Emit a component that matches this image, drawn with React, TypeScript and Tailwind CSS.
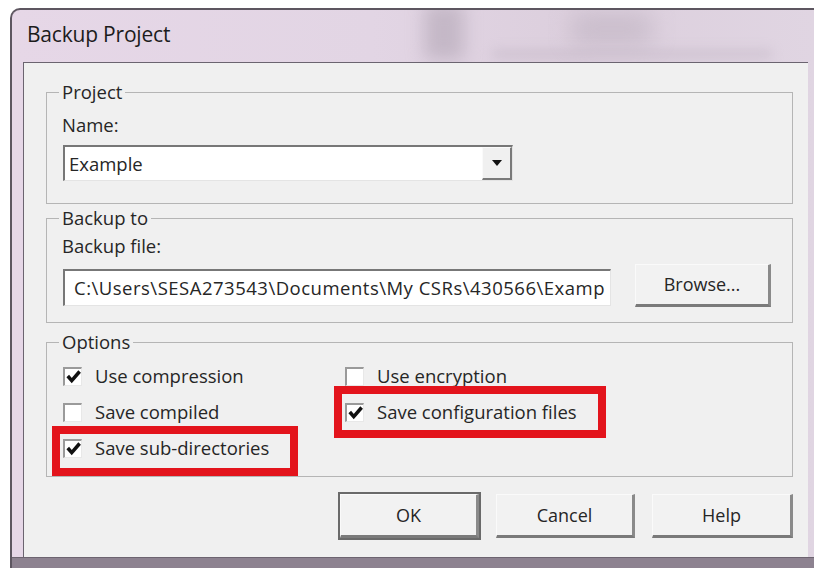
import React from "react";

const font = { fontFamily: '"Open Sans", "Noto Sans", "DejaVu Sans", sans-serif' };

function CheckMark() {
  return (
    <svg viewBox="0 0 12 12" className="w-[15px] h-[15px]">
      <path d="M1.4 5.6 L4.6 9.3 L10.9 2" fill="none" stroke="#111" strokeWidth="2.8" strokeLinejoin="miter" />
    </svg>
  );
}

function Check({ label, checked }: { label: string; checked?: boolean }) {
  return (
    <div className="flex items-center h-[24px]">
      <div className="w-[19px] h-[19px] bg-white border-t-2 border-l-2 border-t-[#9a9a9a] border-l-[#9a9a9a] border-b border-r border-b-[#e8e8e8] border-r-[#e8e8e8] flex items-center justify-center">
        {checked && <CheckMark />}
      </div>
      <span className="ml-[13px] text-[18.5px] text-[#262626] leading-none">{label}</span>
    </div>
  );
}

function Group({ title, className, children }: { title: string; className: string; children: React.ReactNode }) {
  return (
    <div className={`relative border border-[#b5b5b5] ${className}`}>
      <span className="absolute -top-[13px] left-[12px] px-[3px] bg-[#f0f0f0] text-[18.5px] leading-[24px] text-[#262626]">
        {title}
      </span>
      {children}
    </div>
  );
}

function Button({ label, isDefault, className }: { label: string; isDefault?: boolean; className: string }) {
  return (
    <div
      className={`flex items-center justify-center bg-[#f2f2f2] text-[18px] text-[#262626] border-t border-l border-t-[#fafafa] border-l-[#fafafa] border-b-[3px] border-r-[3px] border-b-[#7a7a7a] border-r-[#8a8a8a] ${
        isDefault ? "outline outline-2 outline-[#6a6a6a]" : ""
      } ${className}`}
    >
      {label}
    </div>
  );
}

export default function App() {
  return (
    <div className="w-[814px] h-[568px] bg-white overflow-hidden flex flex-col" style={font}>
      <div className="ml-[10px] mt-[8px] flex-1 flex flex-col rounded-tl-[10px] border-l-2 border-t-2 border-[#5d5660] bg-[linear-gradient(90deg,#e6d7e7_0%,#e2d5e4_45%,#dccfdd_70%,#e0d5e2_100%)] relative overflow-hidden">
        {/* glass title bar haze */}
        <div className="absolute left-[412px] -top-[6px] w-[40px] h-[56px] bg-[#a99dac] blur-[9px] opacity-50" />
        <div className="absolute left-[560px] top-[4px] w-[80px] h-[30px] bg-[#ab9fae] blur-[12px] opacity-40" />
        <div className="absolute left-[480px] top-[40px] w-[280px] h-[8px] bg-[#bcb0bf] blur-[6px] opacity-50" />

        <div className="relative h-[52px] flex items-center pl-[15px] pb-[2px]">
          <span className="text-[21px] text-[#1c1c1c] tracking-[-0.2px]">Backup Project</span>
        </div>

        <div className="relative flex-1 flex flex-col ml-[11px] mr-[6px] border-t border-l border-[#6b6470] bg-[#f0f0f0] pl-[22px] pr-[15px] pt-[29px]">
          {/* Project */}
          <Group title="Project" className="h-[112px]">
            <div className="pl-[15px] pt-[20px] text-[18.5px] leading-[24px] text-[#262626]">Name:</div>
            <div className="ml-[16px] mt-[8px] w-[450px] h-[36px] flex bg-white border-t-2 border-l-2 border-t-[#777] border-l-[#777] border-b border-r border-b-[#e4e4e4] border-r-[#e4e4e4]">
              <div className="flex-1 flex items-center pl-[4px] text-[18.5px] text-[#262626]">Example</div>
              <div className="w-[30px] flex items-center justify-center bg-[#f0f0f0] border-t border-l border-[#fafafa] border-b-2 border-r-2 border-b-[#7a7a7a] border-r-[#7a7a7a]">
                <svg viewBox="0 0 10 6" className="w-[10px] h-[6px]">
                  <path d="M0 0 H10 L5 6 Z" fill="#111" />
                </svg>
              </div>
            </div>
          </Group>

          {/* Backup to */}
          <Group title="Backup to" className="mt-[14px] h-[105px]">
            <div className="pl-[15px] pt-[15px] text-[18.5px] leading-[24px] text-[#262626]">Backup file:</div>
            <div className="flex items-start ml-[16px] mt-[6px]">
              <div className="mt-[5px] w-[548px] h-[37px] flex items-center pl-[9px] bg-white border-t-2 border-l-2 border-t-[#777] border-l-[#777] border-b border-r border-b-[#e4e4e4] border-r-[#e4e4e4] text-[18.5px] tracking-[0.5px] text-[#262626] whitespace-nowrap overflow-hidden">
                C:\Users\SESA273543\Documents\My CSRs\430566\Examp
              </div>
              <Button label="Browse..." className="ml-[24px] w-[136px] h-[43px]" />
            </div>
          </Group>

          {/* Options */}
          <Group title="Options" className="mt-[19px] h-[135px]">
            <div className="flex pl-[16px] pt-[21px]">
              <div className="w-[282px] flex flex-col gap-[12px]">
                <Check label="Use compression" checked />
                <Check label="Save compiled" />
                <Check label="Save sub-directories" checked />
              </div>
              <div className="flex flex-col gap-[12px]">
                <Check label="Use encryption" />
                <Check label="Save configuration files" checked />
              </div>
            </div>
          </Group>

          {/* dialog buttons */}
          <div className="flex justify-end gap-[17px] mt-[17px]">
            <Button label="OK" isDefault className="w-[139px] h-[44px]" />
            <Button label="Cancel" className="w-[139px] h-[44px]" />
            <Button label="Help" className="w-[141px] h-[44px]" />
          </div>

          {/* highlight boxes */}
          <div className="absolute left-[28px] top-[363px] w-[246px] h-[50px] border-[8px] border-[#e3141c]" />
          <div className="absolute left-[310px] top-[323px] w-[272px] h-[52px] border-[8px] border-[#e3141c]" />
        </div>

        <div className="h-[11px] bg-[#8d8290] border-t border-[#6d6470]" />
      </div>
    </div>
  );
}
